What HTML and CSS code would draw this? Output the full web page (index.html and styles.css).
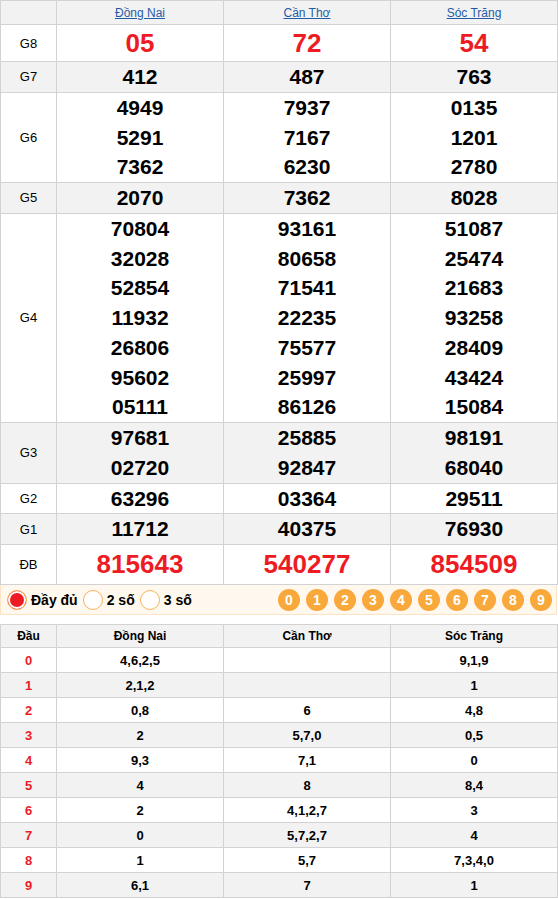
FILE: index.html
```html
<!DOCTYPE html>
<html lang="vi">
<head>
<meta charset="utf-8">
<link rel="stylesheet" href="styles.css">
</head>
<body>
<table class="kq">
  <colgroup><col class="c-lbl"><col class="c-p"><col class="c-p"><col class="c-p"></colgroup>
  <tr class="hdr"><th></th><th><a href="#">Đồng Nai</a></th><th><a href="#">Cần Thơ</a></th><th><a href="#">Sóc Trăng</a></th></tr>
  <tr class="g8"><td class="lbl">G8</td><td class="big">05</td><td class="big">72</td><td class="big">54</td></tr>
  <tr class="alt"><td class="lbl">G7</td><td><div class="n">412</div></td><td><div class="n">487</div></td><td><div class="n">763</div></td></tr>
  <tr><td class="lbl">G6</td>
    <td><div class="n">4949</div><div class="n">5291</div><div class="n">7362</div></td>
    <td><div class="n">7937</div><div class="n">7167</div><div class="n">6230</div></td>
    <td><div class="n">0135</div><div class="n">1201</div><div class="n">2780</div></td></tr>
  <tr class="alt"><td class="lbl">G5</td><td><div class="n">2070</div></td><td><div class="n">7362</div></td><td><div class="n">8028</div></td></tr>
  <tr><td class="lbl">G4</td>
    <td><div class="n">70804</div><div class="n">32028</div><div class="n">52854</div><div class="n">11932</div><div class="n">26806</div><div class="n">95602</div><div class="n">05111</div></td>
    <td><div class="n">93161</div><div class="n">80658</div><div class="n">71541</div><div class="n">22235</div><div class="n">75577</div><div class="n">25997</div><div class="n">86126</div></td>
    <td><div class="n">51087</div><div class="n">25474</div><div class="n">21683</div><div class="n">93258</div><div class="n">28409</div><div class="n">43424</div><div class="n">15084</div></td></tr>
  <tr class="alt"><td class="lbl">G3</td>
    <td><div class="n">97681</div><div class="n">02720</div></td>
    <td><div class="n">25885</div><div class="n">92847</div></td>
    <td><div class="n">98191</div><div class="n">68040</div></td></tr>
  <tr><td class="lbl">G2</td><td><div class="n">63296</div></td><td><div class="n">03364</div></td><td><div class="n">29511</div></td></tr>
  <tr class="alt"><td class="lbl">G1</td><td><div class="n">11712</div></td><td><div class="n">40375</div></td><td><div class="n">76930</div></td></tr>
  <tr class="db"><td class="lbl">ĐB</td><td class="big">815643</td><td class="big">540277</td><td class="big">854509</td></tr>
</table>

<div class="bar">
  <div class="opts">
    <label class="opt"><span class="radio on"></span>Đầy đủ</label>
    <label class="opt"><span class="radio"></span>2 số</label>
    <label class="opt"><span class="radio"></span>3 số</label>
  </div>
  <div class="digits">
    <span class="dg">0</span><span class="dg">1</span><span class="dg">2</span><span class="dg">3</span><span class="dg">4</span><span class="dg">5</span><span class="dg">6</span><span class="dg">7</span><span class="dg">8</span><span class="dg">9</span>
  </div>
</div>

<table class="loto">
  <colgroup><col class="c-lbl"><col class="c-p"><col class="c-p"><col class="c-p"></colgroup>
  <tr class="hdr"><th>Đầu</th><th>Đồng Nai</th><th>Cần Thơ</th><th>Sóc Trăng</th></tr>
  <tr><td class="d">0</td><td>4,6,2,5</td><td></td><td>9,1,9</td></tr>
  <tr class="alt"><td class="d">1</td><td>2,1,2</td><td></td><td>1</td></tr>
  <tr><td class="d">2</td><td>0,8</td><td>6</td><td>4,8</td></tr>
  <tr class="alt"><td class="d">3</td><td>2</td><td>5,7,0</td><td>0,5</td></tr>
  <tr><td class="d">4</td><td>9,3</td><td>7,1</td><td>0</td></tr>
  <tr class="alt"><td class="d">5</td><td>4</td><td>8</td><td>8,4</td></tr>
  <tr><td class="d">6</td><td>2</td><td>4,1,2,7</td><td>3</td></tr>
  <tr class="alt"><td class="d">7</td><td>0</td><td>5,7,2,7</td><td>4</td></tr>
  <tr><td class="d">8</td><td>1</td><td>5,7</td><td>7,3,4,0</td></tr>
  <tr class="alt"><td class="d">9</td><td>6,1</td><td>7</td><td>1</td></tr>
</table>
</body>
</html>
```

FILE: styles.css
```css
* { box-sizing: border-box; }
body {
  margin: 0;
  background: #fff;
  font-family: "Liberation Sans", Arial, sans-serif;
  color: #000;
}
table {
  width: 557px;
  border-collapse: collapse;
  table-layout: fixed;
}
.c-lbl { width: 56px; }
.c-p { width: 167px; }
th, td {
  border: 1px solid #d2d2d2;
  padding: 0;
  text-align: center;
  vertical-align: middle;
}
.hdr th { background: #f2f2f2; }
.alt td { background: #f2f2f2; }

.kq .hdr th { height: 24px; font-size: 12px; font-weight: normal; }
.kq .hdr a { color: #1f5ca8; text-decoration: underline; }
.kq .lbl { font-size: 13px; }
.kq .n {
  font-size: 21px;
  font-weight: bold;
  line-height: 29.75px;
}
.kq .big {
  font-size: 26px;
  font-weight: bold;
  color: #ed1c24;
}
.kq .g8 td { height: 37px; }
.kq .db td { height: 40px; }

.bar {
  height: 30px;
  display: flex;
  align-items: center;
  justify-content: space-between;
  background: #fff8ee;
  border: 1px solid #fce3c2;
  border-top: none;
  width: 557px;
  padding: 0 4px 0 6px;
}
.opts { display: flex; align-items: center; gap: 5px; }
.opt {
  display: flex;
  align-items: center;
  gap: 4px;
  font-size: 14px;
  font-weight: bold;
}
.radio {
  width: 20px;
  height: 20px;
  border-radius: 50%;
  border: 1px solid #f7b25a;
  background: #fff;
  display: inline-block;
}
.radio.on {
  background: #ed1c24;
  box-shadow: inset 0 0 0 2px #fff;
}
.digits { display: flex; gap: 6px; }
.dg {
  width: 22px;
  height: 22px;
  border-radius: 50%;
  background: #f9a83b;
  color: #fff;
  font-size: 14px;
  font-weight: bold;
  display: flex;
  align-items: center;
  justify-content: center;
}

.loto { margin-top: 9px; }
.loto .hdr th { height: 23px; font-size: 12px; font-weight: bold; }
.loto td { height: 25px; font-size: 13px; font-weight: bold; }
.loto .d { color: #ed1c24; }
```
